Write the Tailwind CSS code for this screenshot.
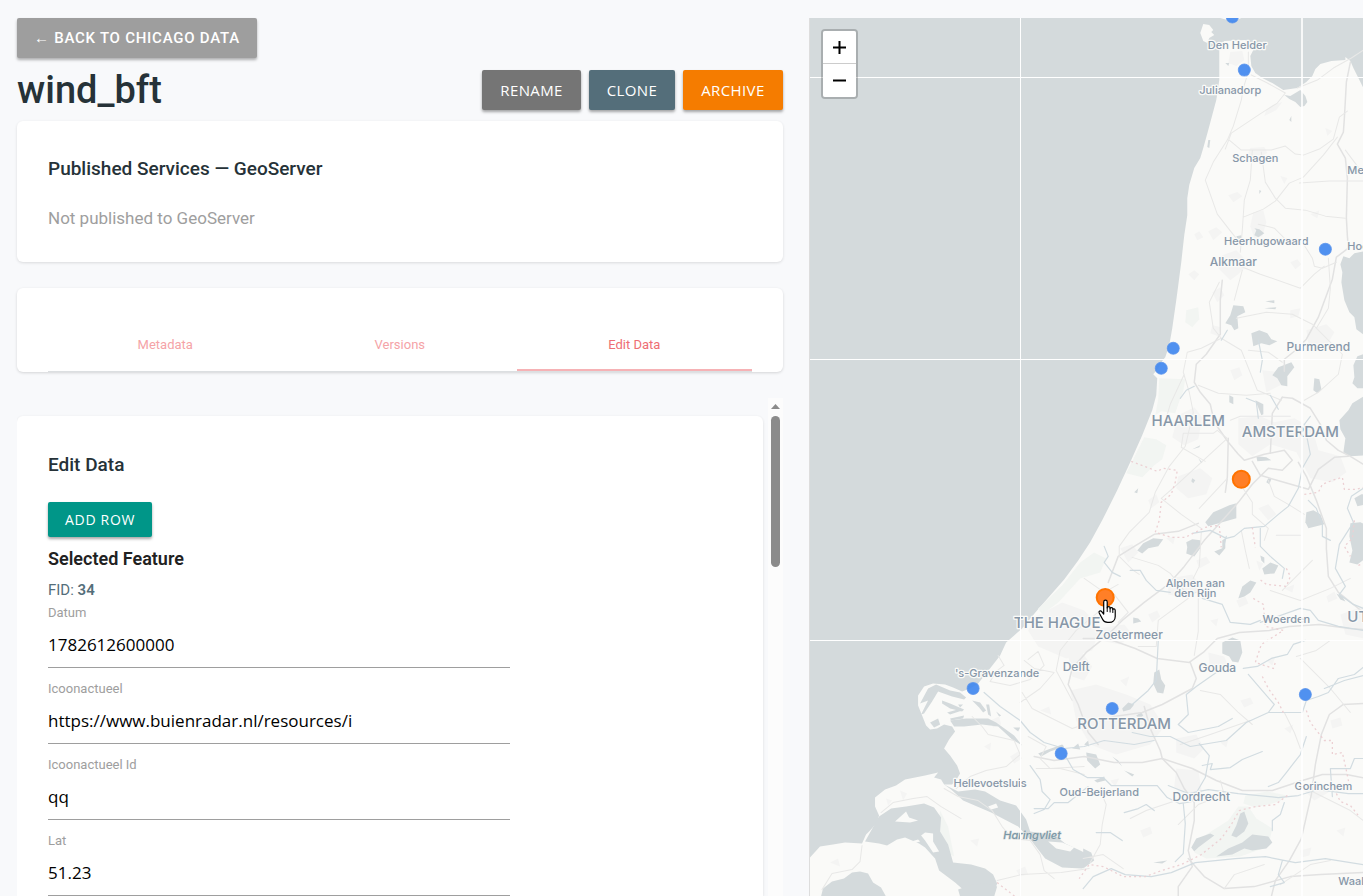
<!DOCTYPE html>
<html lang="en">
<head>
    <meta charset="UTF-8">
    <meta name="viewport" content="width=device-width, initial-scale=1.0">
    <title>wind_bft</title>
    <script src="https://cdn.jsdelivr.net/npm/@tailwindcss/browser@4"></script>
</head>
<body class="bg-[#f8f9fb] font-['Roboto',sans-serif] text-[#263238]">
    <main class="grid h-screen grid-cols-[58fr_42fr] gap-[26px] overflow-hidden pt-[18px] pl-[17px]">

        <!-- Dataset panel -->
        <section class="flex min-h-0 min-w-0 flex-col">
            <div>
                <a href="#" class="inline-flex h-10 items-center rounded-xs bg-[#9e9e9e] px-[17px] text-[15px] font-medium tracking-wider text-white uppercase shadow-[0_2px_3px_rgba(0,0,0,0.3)]">← Back to Chicago Data</a>
            </div>
            <div class="mt-3 flex h-10 shrink-0 items-center justify-between">
                <h1 class="text-[38px] leading-10 font-medium">wind_bft</h1>
                <div class="flex gap-2 font-['Open_Sans',sans-serif] text-[15px] text-white">
                    <button class="h-10 rounded-xs bg-[#757575] px-[18px] tracking-wide uppercase shadow-[0_2px_3px_rgba(0,0,0,0.35)]">Rename</button>
                    <button class="h-10 rounded-xs bg-[#546e7a] px-[18px] tracking-wide uppercase shadow-[0_2px_3px_rgba(0,0,0,0.35)]">Clone</button>
                    <button class="h-10 rounded-xs bg-[#f57c00] px-[18px] tracking-wide uppercase shadow-[0_2px_3px_rgba(0,0,0,0.35)]">Archive</button>
                </div>
            </div>

            <div class="mt-[11px] h-[141px] shrink-0 rounded-md bg-white px-[31px] pt-[34px] shadow-[0_1px_3px_rgba(0,0,0,0.12)]">
                <h2 class="text-[19px] leading-7 font-medium">Published Services — GeoServer</h2>
                <p class="mt-[23px] text-[17px] leading-6 text-[#9e9e9e]">Not published to GeoServer</p>
            </div>

            <div class="mt-[26px] h-[84px] shrink-0 rounded-md bg-white px-[31px] pt-8 shadow-[0_1px_3px_rgba(0,0,0,0.15)]">
                <nav class="grid h-[52px] grid-cols-3 border-b border-[#dcdfe1] text-center text-[13px] leading-[48px]">
                    <a href="#" class="pt-px text-[#f5a3a7]">Metadata</a>
                    <a href="#" class="pt-px text-[#f5a3a7]">Versions</a>
                    <a href="#" class="border-b-2 border-[#f6b2b5] pt-px text-[#ee6e73]">Edit Data</a>
                </nav>
            </div>

            <div class="mt-[26px] flex min-h-0 flex-1 gap-[5px] overflow-hidden">
                <div class="mt-[18px] min-w-0 flex-1 rounded-t-md bg-white px-[31px] pt-[35px] shadow-[0_1px_3px_rgba(0,0,0,0.12)]">
                    <h2 class="text-[19px] leading-7 font-medium">Edit Data</h2>
                    <button class="mt-[23px] block h-[35px] rounded-xs bg-[#009688] px-[17px] font-['Open_Sans',sans-serif] text-[14px] tracking-wider text-white uppercase shadow-[0_2px_3px_rgba(0,0,0,0.35)]">Add Row</button>
                    <h3 class="mt-2 text-[18px] leading-7 font-semibold text-[#212121]">Selected Feature</h3>
                    <p class="mt-[7px] text-[15px] leading-5 text-[#546e7a]">FID: <b class="font-semibold">34</b></p>
                    <form class="mt-[5px] flex w-[462px] max-w-full flex-col gap-[13px]">
                        <div>
                            <label for="datum" class="block text-[13px] leading-4 text-[#9e9e9e]">Datum</label>
                            <input id="datum" value="1782612600000" class="block h-[47px] w-full border-b border-[#9e9e9e] font-['Open_Sans',sans-serif] text-[17px] text-black outline-none">
                        </div>
                        <div>
                            <label for="icoon" class="block text-[13px] leading-4 text-[#9e9e9e]">Icoonactueel</label>
                            <input id="icoon" value="https://www.buienradar.nl/resources/i" class="block h-[47px] w-full border-b border-[#9e9e9e] font-['Open_Sans',sans-serif] text-[17px] text-black outline-none">
                        </div>
                        <div>
                            <label for="icoonId" class="block text-[13px] leading-4 text-[#9e9e9e]">Icoonactueel Id</label>
                            <input id="icoonId" value="qq" class="block h-[47px] w-full border-b border-[#9e9e9e] font-['Open_Sans',sans-serif] text-[17px] text-black outline-none">
                        </div>
                        <div>
                            <label for="lat" class="block text-[13px] leading-4 text-[#9e9e9e]">Lat</label>
                            <input id="lat" value="51.23" class="block h-[47px] w-full border-b border-[#9e9e9e] font-['Open_Sans',sans-serif] text-[17px] text-black outline-none">
                        </div>
                    </form>
                </div>
                <!-- scrollbar -->
                <div class="flex w-[15px] flex-col items-center bg-[#fcfcfc] pt-[6px]">
                    <svg width="9" height="5" viewBox="0 0 9 5"><path d="M4.5 0 9 5H0z" fill="#8b8b8b"/></svg>
                    <div class="mt-[7px] h-[151px] w-[9px] rounded-full bg-[#8b8b8b]"></div>
                </div>
            </div>
        </section>

        <!-- Map -->
        <section class="relative min-h-0 min-w-0 overflow-hidden border-l border-[#dddddd] bg-[#d4dadc]">
            <svg class="block h-full w-full" viewBox="810 18 553 878" preserveAspectRatio="xMinYMin slice" fill="none" stroke-linejoin="round" stroke-linecap="round">
                <!-- land -->
                <g fill="#fafaf8">
                    <path d="M1219 50L1224 41 1245 40 1251 44 1253 50 1250 56 1251 66 1255 73 1262 78 1272 83 1283 90 1297 88 1306 82 1312 76 1315 69 1320 64 1331 61 1345 60 1345 57 1350 61 1353 68 1358 78 1363 88 1365 88V896H810V857L820 846 833 844 845 842 862 843 866 834 870 830 877 822 879 815 875 806 875 797 885 789 896 785 905 779 925 775 938 772 934 777 941 779 944 784 952 784 957 778 960 773 957 765 950 755 944 748 949 739 955 731 952 726 944 724 937 728 930 729 926 725 922 715 918 705 918 695 924 686 933 683 945 684 953 687 962 691 970 688 978 683 986 673 1000 655 1006 642 1014 635 1022 628 1036 611 1050 595 1064 579 1078 560 1090 542 1102 520 1117 490 1130 462 1142 435 1152 410 1156 395 1157 378 1153 374 1158 368 1161 362 1165 357 1169 345 1172 328 1176 300 1178 285 1181 262 1184 235 1187 215 1187 198 1189 185 1194 168 1200 158 1203 148 1208 130 1216 100 1219 80z"/>
                    <path d="M1203 24l6 1 4 5-2 2 3 3-5 3-2 5-4-2-3-8z"/>
                    <path d="M1220 18h21l-7 3-7-1z"/>
                </g>
                <!-- dune and forest areas -->
                <g fill="#f2f5f2">
                    <path d="M1159 378l26 1-2 12-4 10-4 12-14-2-6 4 3-16z"/>
                    <path d="M1144 437L1156 439 1166 445 1162 459 1154 465 1142 477 1126 473z"/>
                    <path d="M1186 310l12-3 1 12-7 8-7-5z"/>
                    <path d="M1062 585l18-23 14-10 12 6-6 14-20 6-22 24-16 12-4-6z"/>
                    <path d="M1238 806l10 0 8 12 16 10-4 18-28 10-34 2-12-6 12-18 22-14z"/>
                    <path d="M1245 795l22-4 20 4-8 6-24 6-12-4z"/>
                    <path d="M940 810l8 16 6 30-8-4-8-26z"/>
                </g>
                <!-- built-up areas -->
                <g fill="#f4f4f3">
                    <path d="M1222 255l14-5 6 6 6 8-10 10-8 6-12-12z"/>
                    <path d="M1253 212l10-2 3 12-4 14-8 2-4-12z"/>
                    <path d="M1230 52l12-1 2 9-8 6-8-3z"/>
                    <path d="M1250 148l14-1 3 6-10 6-10-4z"/>
                    <path d="M1272 105l10-3-6 8-12 6 2-6z"/>
                    <path d="M1178 415l16-8 8 10-4 22-14 6-12-8z"/>
                    <path d="M1238 418l22-2 14 6 20-4 18 10 6 22 22 6 6 16-14 10-22-4-14-26-26-8-18 12-14-12z"/>
                    <path d="M1262 370l18 2 2 12-16 8z"/>
                    <path d="M1306 330l20-6 8 8-8 14-18-2z"/>
                    <path d="M1036 616l26-14 22 8 16 18-8 22-26 8-28-12-10-16z"/>
                    <path d="M1098 628l26-4 8 10-12 10-20-4z"/>
                    <path d="M1070 690l26-6 30 10 24 10 14 22-14 18-34 10-26-10-14-24z"/>
                    <path d="M1068 655l14-3 10 14-8 14-12-4z"/>
                    <path d="M1176 738l20-4 8 14-10 10-18-6z"/>
                    <path d="M1176 768l22 2 4 24-14 6-14-14z"/>
                    <path d="M1208 652l16 4 4 10-18 4z"/>
                    <path d="M1178 476l22-8 12 10-6 16-18 4-12-10z"/>
                    <path d="M1120 548l12-4 6 8-10 10z"/>
                    <path d="M1168 578l24-4 10 14-14 10-20-4z"/>
                    <path d="M1258 508l10-4 8 10-8 6z"/>
                    <path d="M1340 614l23-8v32l-18-4z"/>
                    <path d="M1300 786l18-4 10 10-14 8z"/>
                    <path d="M1188 274l6-4 5 4-5 6zM1208 231l8-4 6 5-9 8zM1194 234l5-3 4 6-6 3zM1212 292l8-5 4 8-7 7zM1290 262l7-3 4 5-6 5zM1310 214l9-4-2 8zM1228 195l9-3 5 4-9 6zM1280 176l7 2-3 6zM1325 128l7 3-5 5zM1212 325l9 2-3 9-8-3zM1230 370l9-3 3 8-8 5zM1290 310l10-2-2 8-8 2zM1148 500l8-6 3 8-8 6zM1166 538l9-2-2 8zM1196 560l10-4 4 6-11 6zM1236 600l9-4 3 7-9 4zM1256 560l7 3-4 7zM1284 588l10-4-2 8zM1326 596l8-5 3 7-9 4zM1210 620l8-2-2 8zM1148 614l9-4 3 6-8 6zM1120 680l9-4-3 10zM1240 700l10-3 3 6-9 4zM1284 728l9-4-3 9zM1330 720l10-3 2 8-10 3zM1220 742l8-3-2 8zM1110 780l9-2-4 8zM1140 830l10-4 2 7-9 4zM1300 850l11-3-2 8-8 2zM1336 830l9-3-2 9zM990 720l9-4 2 8-8 3zM1010 756l8-5 4 7-8 5zM984 746l7-4-1 8zM1040 710l9-4 2 8zM970 840l9-2-2 8zM900 790l7 3-4 7zM886 798l6 2-4 5zM830 862l8-4 2 8zM1016 870l9-4 3 8-8 2zM1266 660l9-4-3 9z"/>
                </g>
                <!-- water -->
                <g fill="#d4dadc">
                    <path d="M1284 95l6 1 5-3 5-3 5 6 2 6-3 4-4 1-5-5-6-3z"/>
                    <path d="M1365 251l-11 2-5 5-6-2-3 8 2 8-1 10 3 18 5 12 5 5 2 12 9 7z"/>
                    <path d="M1365 353l-8 3-4 9 1 12-2 6 5 5 8 0z"/>
                    <path d="M1365 395l-13 8-4 7-9 10 1 9 5 9-2 14 7 4 15-1z"/>
                    <path d="M944 784l14 7 17-2 10 2 15 9 16 5 10 14 4 12 25 4 10 8 15 7 8 4 4 6-10 8-20-1-17-9-14-18-13-14-27-14-28-12-12-11z"/>
                    <path d="M879 816l12-8 15-2 18-3 10 4 7 10-1 14 8 13 5 18 18 2 14 4 8 6 4 9-4 13h-22l-16-14-16-12-4-12-10-11-6-4-14-6-8 2-10 6-8-2-14-2z"/>
                    <path d="M821 896l2-8 9-7 12-3 8-6 8-1 8 2 5 9 8 5 5 9z"/>
                    <path d="M958 889l14-5 14-1 11 3-3 10h-34z"/>
                    <!-- Maasvlakte docks -->
                    <path d="M928 688l8-4 14 6 10 2 6 5-2 2-12-3-14-5-6 10-8 12-3 1 7-14-8 3zM942 700l8 3 14 6-2 2-12-3-8-5zM947 712l14-4 1 2-12 4zM950 718l14-3-1 3-12 2zM958 704l5 0-3 3zM930 722l8-4 2 6-6 3zM972 700l8 2 6 8-3 2-4-5zM986 704l3 0 2 12-3-2zM996 711l5 4-2 1zM1013 727l7 0-2 4z"/>
                    <path d="M950 720l16-2 22 0 8 4 18 13 8 10-10-6-14-13-16-2-18 2-10 0z"/>
                    <!-- Rijnmond docks -->
                    <path d="M1038 753l10-4 14-5 2 2-14 5-9 5zM1072 748l6-5 2 6zM1084 744l4-4 1 6zM1086 752l10 2 4 10-5 4-8-8zM1122 708l6-6 6 2-4 5-7 2zM1136 715l5-3 2 3-4 3z"/>
                    <!-- lakes -->
                    <path d="M1233 305l10 1 2 6-8 4 1 12-4 2-3-5-6-2 5-8z"/>
                    <path d="M1251 333l8-3 8 3 4 6 6 2-8 4-8-2-8 3z"/>
                    <path d="M1272 375l6-8 13-5 3 5-7 9 0 10-6-1-4-7z"/>
                    <path d="M1314 378l5 1 2 10-4 4-4-3z"/>
                    <path d="M1229 395l4 2 0 7-4-2z"/>
                    <path d="M1205 522l8-10 16-7 7-2 0 15-14 4-14 4z"/>
                    <path d="M1186 542l6-3 8 1 0 8-6 8-8-3 1-6z"/>
                    <path d="M1306 512l7-2 7 4 4 10-16 4-3-6z"/>
                    <path d="M1350 523l10-1 5 2v34l-8 6-8-2 3-12-3-14z"/>
                    <path d="M1354 498l7-4h4v10l-8 2z"/>
                    <path d="M1137 550l6-7 10-5 10 1-5 7-10 2-6 5z"/>
                    <path d="M1214 551l8-3 0-8 3-2 0 10-6 7z"/>
                    <path d="M1256 456l10 1 5 3-14 1zM1268 478l3 1-2 5-3-2zM1192 478l3 2-2 3-2-2zM1134 492l4-4-1 5zM1192 449l8-4-1 2zM1198 458l4 4-1 1z"/>
                    <path d="M1238 598l4-12 8-6 6 2-6 10-6 4zM1262 568l8-6 8 3-4 8-10 1zM1260 555l4 2 0 6-3-3z"/>
                    <path d="M1222 642l10-5 8 3 2 12-4 10-6-1-3-5-7-3z"/>
                    <path d="M1154 672l5-3 2 10 4 6-2 8-6-1-4-9z"/>
                    <path d="M1133 617l5 1 3 3-8 2zM1336 593l6 3 3 5-5-2z"/>
                    <path d="M1083 848l8 4 3 8-11 8z"/>
                    <path d="M1240 813l4-2 4 12-4 8-8 6-5-2 5-10zM1252 834l16 2 4 6-6 6-14 2-8-2-12 6-16 2 12-8 14-6zM1196 838l14-5 4 2-16 12-4 4-3-4z"/>
                    <path d="M1236 236l5-1 1 8-2 1zM1254 228l5 1 5 4-6 4-4-2 2-5zM1289 120l2-4 0 6zM1208 140l2 0-1 8-2-1zM1225 63l4 0-1 3z"/>
                    <path d="M1259 190l2 1-2 3zM1265 301l9-1 0 3zM1264 308l12-1-1 2zM1255 400l8 4 0 10-2 1zM1094 780l10-4 1 4-8 2zM1124 770l10 4-2 2zM1112 756l6 4 4 6zM1153 862l14-2-5 3z"/>
                </g>
                <!-- islands in the delta -->
                <g fill="#fafaf8">
                    <path d="M895 821l11-10 3 6 9 3-8 2zM925 832l8 1 0 8 6 10-6 1-8-12-4-5zM898 845l20-6 2 2-18 5zM988 806l8-3 2 4-7 2z"/>
                    <path d="M1048 841l14 1 12 5-4 4-14-3z"/>
                </g>
                <!-- motorways -->
                <g stroke="#e2e2e2" stroke-width="1.5">
                    <path d="M1350 62l-4 20-2 36-1 14-6 12 8 14 2 20-1 40 1 18 1 12-12 9-4 22-14 38-12 22-12 12-10 8 0 12"/>
                    <path d="M1222 280l-2 20 0 34-14 20-10 10-2 18 6 10 10 12 4 18 14 20 10 12 6 6 20-6 20-4 8 10-10 10-14-2-16 16-14 18-14 16-20 22-20 26-16 18-24 18-22 18-16 16-20 16-14 16-4 16 10 20 10 28 10 12"/>
                    <path d="M1228 438l-1 40-2 14"/>
                    <path d="M1282 397l10 1 18 10 10 16 6 16 12 10 12 6 13 8"/>
                    <path d="M1282 397l-10 16-2 40"/>
                    <path d="M1298 462l8 14 10 24 10 28 0 20 2 28 10 16 25 20"/>
                    <path d="M1252 461l8 14 20 6 28 8 10-20 16-12 14-1"/>
                    <path d="M1108 582l10-26 16-10 20-12 24-3 20-8"/>
                    <path d="M1083 638l24 0 28 10 22 10 32 4 14-10 14-14 22-6 30-2 20-4 30-2 30 4 23 2"/>
                    <path d="M1190 662l6 16-4 10-30 16-20 8-28 4-14 4"/>
                    <path d="M1144 706l6 22 10 22 2 8-20 4-28 0-30-6-30 4-20-4"/>
                    <path d="M1162 758l14 14 8 16 10 14 0 18-6 30 4 16-14 20 0 10"/>
                    <path d="M1162 758l30 10 24 12 26 10 30 0 30-10 20-6 24 0 20 4"/>
                    <path d="M1363 703l-20 1-14 10-8 20-6 30-4 30-10 44-12 22-14 20-4 16"/>
                    <path d="M1188 858l16 18 20 12 30-2 36-10 30-2 43-2"/>
                </g>
                <!-- roads -->
                <g stroke="#e8e8e7" stroke-width="1">
                    <path d="M1248 52l0 20-5 16-2 12-8 26-6 14-14 22-8 18 12 34 14 18 8 10M1229 140l12 10 30 0 14-4 10 8 8 1 16-6 14-10 6-22 8-6M1251 75l16 8 18 10-8 10-16 10-30 20-6 16M1252 150l-2 30-6 20-2 30-2 22M1261 152l4 30 10 16 10 10 20 2 20 6 20 2M1243 217l20-8 12-8 14-18 14-6 20-22 14-18M1345 150l18 24M1299 183l30-2 34 0M1258 224l16 4 10 10 18 4 10 16 2 8 8 2 14-6"/>
                    <path d="M1240 266l20 8 40 14 14-14 10-8M1242 270l-8 30M1219 282l-10 20 4 26 8 10M1297 88l20-8 16-12 18-10M1363 50l-12 8"/>
                    <path d="M1221 338l20 12 16 40 24 10M1221 338l-20 10-14 4-4 20 6 20 4 20-8 34-16 20-14 26-6 20-20 20-10 14 0 10 14 14 6 4M1184 374l-14 30-6 20M1198 385l20 8 28 2 24-2M1183 433h30l4-3 10 8-50 46-16 14 20 16 20 14M1183 433l-2 14 24 14M1227 478l-28 30M1236 318l30-6 26 2 20 10 20 20 10 10-4 20-20 18-14 8M1248 350l20 2 14 10M1230 420l10-4 50 0M1316 328l12-20 2-20-2-30"/>
                    <path d="M1240 484l12 18 0 12 16 14-4 12M1268 480l6 16 14 8 16 10M1201 532l-2 34-6 12M1241 530l4 20 4 18M1276 535l24 0M1104 592l14-8M1118 622l10-10-14-18-10-2-20-14M1132 557l26 8 12 8 18 22 10-4 0 40-4 24M1188 598l-30 22-2 26-18 0M1100 610l-24 20-16 20-4 20 16 30"/>
                    <path d="M998 655l6 10-8 6-6 10 20 4 20-6 14-14-6-14-10 8M1024 660l10 8 20 4-14 16-20 14M1022 692l10 16 20 10 20 10 12-4M972 716l10 10 6 8 26 6 6 14-14 12-20 4-16 6-14 12M944 788l14 8 20 4 14 10 10 16 10 12 18 2 10 14 4 16 10 8M881 812l12-10 20-4 14-2 14 10 20 12M997 880l24-6 40-2 28-4M862 845l-2 16-8 8-20 4-10 16M1028 736l18 10-6 12 10 10 34-2M1036 768h24l24 6"/>
                    <path d="M1083 858l20-4 20 14M1100 790l6 14-4 20-2 20-10 18M1200 690l20 4 18 18 14 12M1300 658l30 30 20 24M1284 712l10 20 6 16M1220 780l4 14-26 10-20 20M1250 720l-40 14-30 10M1310 790l40 20 13 10M1330 860l-20 4-30 20M1224 888l10-14 30-10M1176 800l-30 10-16 8M1270 590l30 10 30-12 20-10M1312 560l-30 30M1330 640l-14 10-20 6"/>
                </g>
                <!-- rivers and canals -->
                <g stroke="#d2dce1" stroke-width="1.2">
                    <path d="M1192 533l18-3 16 8 8-2 10-8 20-2 14-12 10-8 10-18 4-20 8-14-4-20-2-10 6-8"/>
                    <path d="M1260 528l0 18 10 10 14 12-2 10M1226 536l-2 8M1308 500l8 8 6 16 0 12 8 4M1363 488l-12 8-4 12 6 14-14 22-4 24 10 18-6 8 14 10 10 4"/>
                    <path d="M1130 570l10 0 6 10 10 10 14 2M1202 598l20 6 8 18 20 2 10-4M1260 622l40-14 10 2 8 10 20 6 25 4M1104 546l4 10-4 6 8 10 8 4M1158 640l-2 40-8 10-16 14"/>
                    <path d="M1243 668l14-2 14-8 16-4 6-10 12-4M1216 672l-20 14-10 8 2 20-10 10 10 8 30-6 14-8M1248 674l12 14 14 16-6 8-22 10-20 18-36 6-20-10-20 0-18-4M1268 712l34 0 4-12 12-4 10-4 10-14 16-4 10-8M1324 688l20-8 19-5"/>
                    <path d="M984 692l16 14 20 14 10 12 14 10 20 6 20-2 20-6 30 4 20-4M1065 755l8 14 14 8 16 0 8 8 26 0 20 0 10 12 12 6 12-2 14-24 4-22-10-12M1030 765l10 14 2 12 8 8-6 10-10 4M1034 808l14 0 6-6 14 0 20-16"/>
                    <path d="M1202 765l10-2-2 6 20-2 12-8 10-4 10-4M1268 786l10-4 8-10 14-18 6-18M1168 785l20 8 20-4 30 4 40 4 20-2 20-6 30 4 35 0"/>
                    <path d="M1332 796l-2-28 20 0 4-10 9 0M1183 803l2 20-2 30-8 8M1083 888l10-12 18-8 14 6 26 2 20-4 24-10 40-4 30-2 30 6 30-4 38 6M1282 860l-4 14 6 8-14 4M1272 830l0-10 8-6 4-12M1124 812l14-4 8-4 8 6M1096 832h14l12 8"/>
                    <path d="M1227 330l-6 10M1258 340l4 20-2 12M1246 398l10 4 2 16M1270 395l8 14M1180 398l6-8 8-4"/>
                </g>
                <!-- provincial borders -->
                <g stroke="#ecd0d3" stroke-width="1.3" stroke-dasharray="2 3" stroke-linecap="butt">
                    <path d="M1131 461l26 10 6-3 14 2-2 12-4 12-10 8-2 18-4 12 16 5 14 0 20-10 14-2 2 22M1252 527l3 20M1304 494l14-2 4-8 10-4 10-3 2 12 12 0 7-2M1286 568l4 8-4 10-20-2-8-6M1253 598l10 6 2 22 18 4-22 14-6 18 18 6 2-6M1262 676l6 12 10 14 6 12M1306 710l4 12 14 18 8 0 0 14 10-2 4 18 4 20M1336 793l4 8 10 4 8 10"/>
                    <path d="M1287 795l-12 9-20 2-16 4-8 14-10 14-20 16-20 10-20 6-16 6-22 0-20-10-14-2-10 14M997 882l18 14M1354 520l-2 18-8 8 6 10M1358 565l5-2"/>
                </g>
                <!-- place labels -->
                <g class="font-['Inter',sans-serif] text-[11px] font-medium" fill="#8797a8" stroke="#fafaf8" stroke-width="2.5" text-anchor="middle" style="paint-order:stroke">
                    <text x="1237" y="49">Den Helder</text>
                    <text x="1230" y="94">Julianadorp</text>
                    <text x="1255" y="162">Schagen</text>
                    <text x="1347" y="174" text-anchor="start">Medemblik</text>
                    <text x="1266" y="245">Heerhugowaard</text>
                    <text x="1347" y="250" text-anchor="start">Hoorn</text>
                    <text x="1195" y="587">Alphen aan</text>
                    <text x="1195" y="597">den Rijn</text>
                    <text x="1286" y="623">Woerden</text>
                    <text x="997" y="677">'s-Gravenzande</text>
                    <text x="990" y="786">Hellevoetsluis</text>
                    <text x="1099" y="795">Oud-Beijerland</text>
                    <text x="1323" y="789">Gorinchem</text>
                    <text x="1338" y="884" text-anchor="start">Waalwijk</text>
                    <text x="1032" y="838" class="italic" fill="#7b98a6" stroke="#d4dadc" stroke-width="1">Haringvliet</text>
                </g>
                <g class="font-['Inter',sans-serif] text-[12px] font-medium" fill="#8797a8" stroke="#fafaf8" stroke-width="2.5" text-anchor="middle" style="paint-order:stroke">
                    <text x="1233" y="266">Alkmaar</text>
                    <text x="1318" y="351">Purmerend</text>
                    <text x="1129" y="639">Zoetermeer</text>
                    <text x="1076" y="671">Delft</text>
                    <text x="1217" y="672">Gouda</text>
                    <text x="1201" y="800">Dordrecht</text>
                </g>
                <g class="font-['Inter',sans-serif] text-[15px] font-medium" fill="#8797a8" stroke="#fafaf8" stroke-width="2.5" text-anchor="middle" style="paint-order:stroke">
                    <text x="1188" y="426">HAARLEM</text>
                    <text x="1290" y="437">AMSTERDAM</text>
                    <text x="1057" y="628">THE HAGUE</text>
                    <text x="1124" y="729">ROTTERDAM</text>
                    <text x="1347" y="622" text-anchor="start">UTRECHT</text>
                </g>
                <!-- tile seams -->
                <g fill="#fff" shape-rendering="crispEdges">
                    <path d="M810 77h555v1H810zM810 359h555v1H810zM810 640h555v1H810zM1020 18h1v878h-1z"/>
                    <path d="M1301 18h2v878h-2z" fill-opacity="0.8"/>
                </g>
                <!-- stations -->
                <g fill="#3d85ee" fill-opacity="0.9" stroke="#5a94ec" stroke-width="1" stroke-opacity="0.8">
                    <circle cx="1232" cy="17" r="6"/>
                    <circle cx="1244" cy="70" r="6"/>
                    <circle cx="1325" cy="249" r="6"/>
                    <circle cx="1173" cy="348" r="6"/>
                    <circle cx="1161" cy="368" r="6"/>
                    <circle cx="973" cy="688" r="6"/>
                    <circle cx="1112" cy="708" r="6"/>
                    <circle cx="1061" cy="753" r="6"/>
                    <circle cx="1305" cy="694" r="6"/>
                </g>
                <g fill="#ff7f27" stroke="#ff7300" stroke-width="2">
                    <circle cx="1241" cy="479" r="8.5"/>
                    <circle cx="1105" cy="597" r="8.5"/>
                </g>
                <!-- hand pointer -->
                <path d="M1103.500 601.500c0-2.500 3.500-2.500 3.500 0v6c0-1.800 2.900-1.800 2.900 0v.8c0-1.600 2.700-1.500 2.700.2v.7c.3-1.200 2.400-1 2.400.8v6c0 3.500-2.500 6-6 6h-1.500c-2.500 0-4-1-5-3l-3.500-6.500c-.8-1.800 1.400-2.700 2.500-1.300l2 2.500z" fill="#fff" stroke="#000" stroke-width="1.200"/>
                <path d="M1107 607v4M1109.900 608v3.500M1112.600 609v3" stroke="#000"/>
            </svg>
            <div class="absolute top-[11px] left-[11px] flex w-[37px] flex-col rounded-sm border-2 border-black/20 bg-clip-padding text-black">
                <button aria-label="Zoom in" class="flex h-[33px] items-center justify-center rounded-t-xs border-b border-[#cccccc] bg-white">
                    <svg width="13" height="13" viewBox="0 0 13 13"><path d="M0 5.500h13v2H0zM5.500 0h2v13h-2z"/></svg>
                </button>
                <button aria-label="Zoom out" class="flex h-[33px] items-center justify-center rounded-b-xs bg-white">
                    <svg width="13" height="13" viewBox="0 0 13 13"><path d="M0 5.500h13v2H0z"/></svg>
                </button>
            </div>
        </section>
    </main>
</body>
</html>
